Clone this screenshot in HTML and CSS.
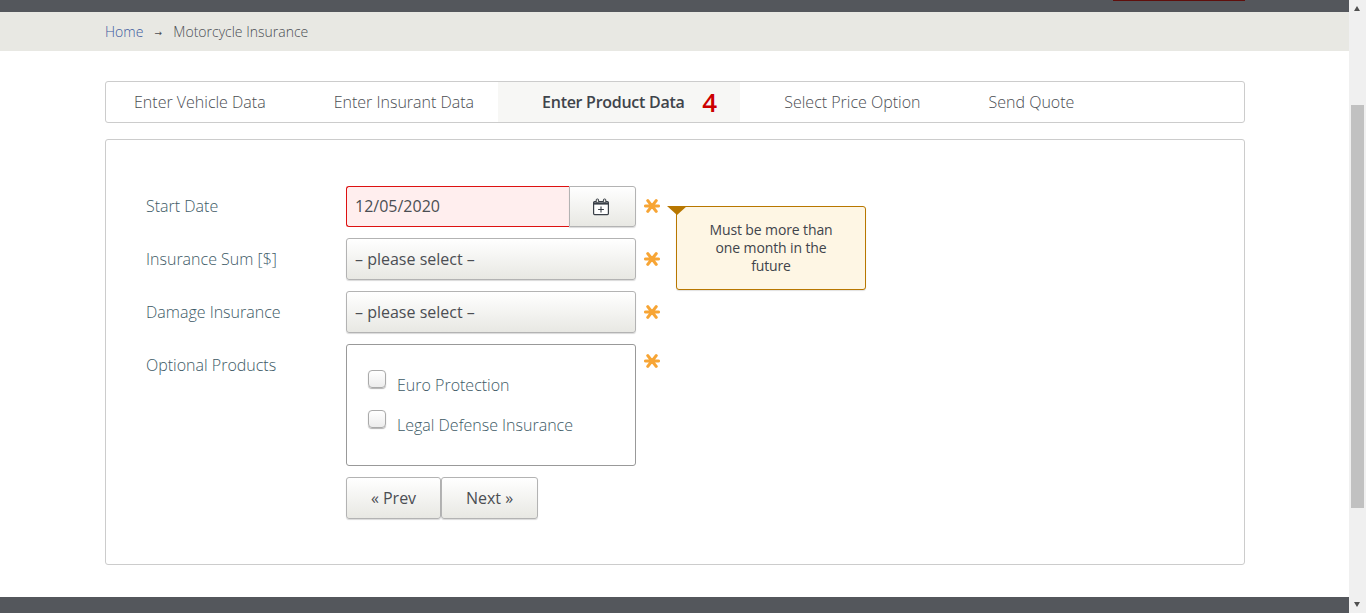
FILE: index.html
```html
<!DOCTYPE html>
<html>
<head>
  <title>Motorcycle Insurance</title>
  <link rel="stylesheet" href="styles.css">
</head>
<body>
  <div class="page">
    <div class="main">
      <div class="topbar"><div class="topbar-inner"><span class="top-btn"></span></div></div>

      <div class="crumbs">
        <a class="crumb-link" href="#">Home</a>
        <span class="crumb-arrow">&rarr;</span>
        <span>Motorcycle Insurance</span>
      </div>

      <div class="content">
        <ul class="tabs">
          <li class="tab">Enter Vehicle Data</li>
          <li class="tab tab-before">Enter Insurant Data</li>
          <li class="tab tab-active">Enter Product Data <span class="tab-count">4</span></li>
          <li class="tab tab-after">Select Price Option</li>
          <li class="tab">Send Quote</li>
        </ul>

        <form class="panel" action="#">
          <div class="row row-first">
            <label class="lbl" for="id_start">Start Date</label>
            <div class="ctl date-group">
              <input class="date-input" type="text" id="id_start" value="12/05/2020">
              <button class="date-btn" type="button">
                <svg width="18" height="18" viewBox="0 0 18 18" fill="none">
                  <rect x="1.6" y="3.6" width="14.8" height="13" rx="1" fill="#fff" stroke="#3a4048" stroke-width="1.2"/>
                  <path d="M2 5.5H16" stroke="#3a4048" stroke-width="2.2"/>
                  <rect x="4.2" y="1" width="2.4" height="3.6" rx="1" fill="#e8e8e3" stroke="#3a4048"/>
                  <rect x="11.4" y="1" width="2.4" height="3.6" rx="1" fill="#e8e8e3" stroke="#3a4048"/>
                  <path d="M9 8.6V14.4M6.1 11.5H11.9" stroke="#3a4048" stroke-width="1.1"/>
                </svg>
              </button>
            </div>
            <svg class="req" viewBox="0 0 16 16"><use href="#star"/></svg>
            <div class="tip">
              <span class="tip-arrow"></span>
              Must be more than one month in the future
            </div>
          </div>

          <div class="row">
            <label class="lbl" for="id_sum">Insurance Sum [$]</label>
            <div class="ctl sel">&ndash; please select &ndash;</div>
            <svg class="req" viewBox="0 0 16 16"><use href="#star"/></svg>
          </div>

          <div class="row">
            <label class="lbl" for="id_dmg">Damage Insurance</label>
            <div class="ctl sel">&ndash; please select &ndash;</div>
            <svg class="req" viewBox="0 0 16 16"><use href="#star"/></svg>
          </div>

          <div class="row row-opt">
            <label class="lbl">Optional Products</label>
            <div class="ctl checks">
              <div class="check"><span class="box"></span><span>Euro Protection</span></div>
              <div class="check"><span class="box"></span><span>Legal Defense Insurance</span></div>
            </div>
            <svg class="req req-opt" viewBox="0 0 16 16"><use href="#star"/></svg>
          </div>

          <div class="actions">
            <button class="btn btn-prev" type="button">&laquo; Prev</button>
            <button class="btn btn-next" type="button">Next &raquo;</button>
          </div>
        </form>
      </div>

      <div class="footer"></div>
    </div>

    <div class="scrollbar">
      <span class="sb-up"></span>
      <span class="sb-thumb"></span>
      <span class="sb-down"></span>
    </div>
  </div>

  <svg class="defs" width="0" height="0">
    <defs>
      <g id="star" stroke="#f7a535" stroke-width="3.1" stroke-linecap="round">
        <path d="M1.5 8H14.5M3.8 2.6L12.2 13.4M12.2 2.6L3.8 13.4"/>
      </g>
    </defs>
  </svg>
</body>
</html>
```

FILE: styles.css
```css
html, body {
  margin: 0;
  height: 100%;
  overflow: hidden;
}

body {
  font: 300 16px "Open Sans", "Liberation Sans", sans-serif;
  color: #4b4e53;
  background: #fff;
}

.page {
  display: flex;
  height: 613px;
}

.main {
  width: 1349px;
  display: flex;
  flex-direction: column;
}

.topbar {
  height: 12px;
  background: #54575c;
}

.topbar-inner {
  width: 1140px;
  margin: 0 auto;
  display: flex;
  justify-content: flex-end;
}

.top-btn {
  width: 132px;
  height: 1px;
  background: #5f0f0c;
}

.crumbs {
  height: 39px;
  background: #e8e8e3;
  padding-left: 105px;
  display: flex;
  align-items: center;
  font-size: 14px;
  box-sizing: border-box;
}

.crumb-link {
  color: #3c5a9e;
  text-decoration: none;
}

.crumb-arrow {
  font: 400 9px "DejaVu Sans", sans-serif;
  width: 30px;
  text-align: center;
  box-sizing: border-box;
  padding-top: 3px;
}

.content {
  flex: 1;
  margin: 30px 104px 0 105px;
}

.tabs {
  list-style: none;
  margin: 0;
  padding: 0;
  height: 42px;
  box-sizing: border-box;
  display: flex;
  border: 1px solid #cccccc;
  border-radius: 3px;
}

.tab {
  padding: 0 25px 0 43px;
  line-height: 40px;
  white-space: nowrap;
}

.tab:first-child {
  padding-left: 28px;
}

.tab-before {
  padding-right: 24px;
}

.tab-after {
  padding-left: 44px;
}

.tab-active {
  background: #f7f7f5;
  padding: 0 23px 0 44px;
  font-weight: 600;
  letter-spacing: -0.28px;
  color: #3f444b;
}

.tab-count {
  font-size: 26px;
  font-weight: 600;
  letter-spacing: 0;
  color: #cc0000;
  margin-left: 14px;
  line-height: 40px;
  vertical-align: top;
}

.panel {
  height: 426px;
  box-sizing: border-box;
  margin-top: 16px;
  padding: 46px 40px 0;
  border: 1px solid #cccccc;
  border-radius: 3px;
}

.row {
  display: flex;
  align-items: flex-start;
  margin-top: 11px;
  position: relative;
}

.row-first {
  margin-top: 0;
}

.lbl {
  width: 200px;
  line-height: 42px;
  color: #3d5a66;
}

.row-first .lbl {
  line-height: 41px;
}

.ctl {
  width: 290px;
  height: 42px;
  box-sizing: border-box;
  font-weight: 400;
}

.date-group {
  display: flex;
  height: 41px;
}

.date-input {
  flex: 1;
  min-width: 0;
  box-sizing: border-box;
  border: 1px solid #dd1111;
  border-right: none;
  border-radius: 3px 0 0 3px;
  background: #ffeeee;
  padding: 0 8px 2px;
  font: 400 16px "Open Sans", "Liberation Sans", sans-serif;
  color: #4b4e53;
}

.date-btn {
  width: 67px;
  padding: 0 3px 0 0;
  display: flex;
  align-items: center;
  justify-content: center;
  border: 1px solid #b3b3b3;
  border-radius: 0 3px 3px 0;
  background: linear-gradient(#fff, #e8e8e3);
  box-shadow: 0 1px 1px rgba(0, 0, 0, .15);
}

.sel {
  border: 1px solid #b3b3b3;
  border-radius: 3px;
  background: linear-gradient(#fff, #e8e8e3);
  box-shadow: 0 1px 1px rgba(0, 0, 0, .15);
  padding-left: 8px;
  line-height: 40px;
}

.req {
  width: 16px;
  height: 16px;
  margin: 13px 0 0 8px;
  flex: none;
}

.row-first .req {
  margin-top: 12px;
}

.row-opt .req-opt {
  margin-top: 9px;
}

.tip {
  position: absolute;
  left: 530px;
  top: 20px;
  width: 190px;
  height: 84px;
  box-sizing: border-box;
  padding: 14px 28px 0;
  background: #fef6e4;
  border: 1px solid #b87700;
  border-radius: 3px;
  box-shadow: 0 1px 1px rgba(0, 0, 0, .12);
  font-size: 14px;
  font-weight: 400;
  letter-spacing: -0.12px;
  line-height: 18px;
  text-align: center;
  color: #3f444b;
}

.tip-arrow {
  position: absolute;
  left: -10px;
  top: -1px;
  border-style: solid;
  border-width: 9px 10px 0;
  border-color: #b87700 transparent transparent;
}

.checks {
  height: 122px;
  border: 1px solid #999;
  border-radius: 3px;
  padding: 20px 21px 0;
  font-weight: 300;
}

.check {
  display: flex;
  height: 40px;
  color: #3d5a66;
  line-height: 40px;
  margin-top: 0;
}

.box {
  width: 16px;
  height: 16px;
  margin: 5px 11px 0 0;
  border: 1px solid #aaa;
  border-radius: 4px;
  background: linear-gradient(#fff, #ececec);
  box-shadow: 0 1px 1px rgba(0, 0, 0, .3);
  flex: none;
}

.actions {
  display: flex;
  margin: 11px 0 0 200px;
}

.btn {
  height: 42px;
  padding: 0;
  border: 1px solid #b3b3b3;
  border-radius: 3px;
  background: linear-gradient(#fff, #e8e8e3);
  box-shadow: 0 1px 1px rgba(0, 0, 0, .15);
  font: 400 16px "Open Sans", "Liberation Sans", sans-serif;
  color: #4b4e53;
}

.btn-prev {
  width: 95px;
}

.btn-next {
  width: 97px;
}

.footer {
  height: 16px;
  background: #54575c;
}

.scrollbar {
  width: 17px;
  background: #f0f0f0;
  position: relative;
}

.sb-thumb {
  position: absolute;
  left: 2px;
  top: 105px;
  width: 13px;
  height: 403px;
  background: #c1c1c1;
}

.sb-up, .sb-down {
  position: absolute;
  left: 5px;
  border-style: solid;
  border-color: transparent;
}

.sb-up {
  top: 6px;
  border-width: 0 3.5px 5px;
  border-bottom-color: #505050;
}

.sb-down {
  bottom: 6px;
  border-width: 5px 3.5px 0;
  border-top-color: #505050;
}

.defs {
  position: absolute;
}
```
